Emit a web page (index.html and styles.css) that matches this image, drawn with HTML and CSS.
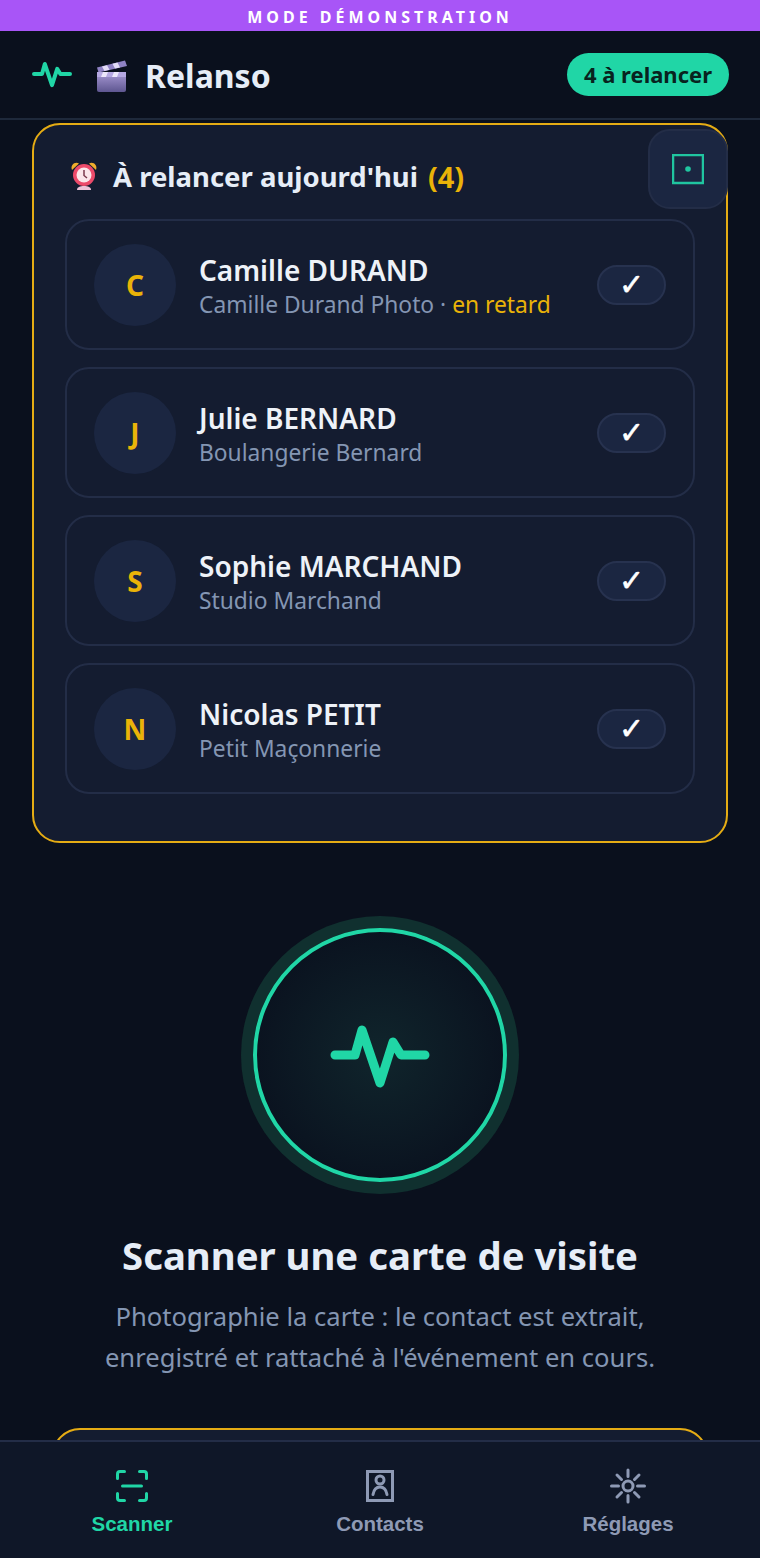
FILE: index.html
```html
<!DOCTYPE html>
<html lang="fr">
<head>
<meta charset="utf-8">
<title>Relanso</title>
<link rel="stylesheet" href="styles.css">
</head>
<body>
<div class="app">
  <div class="demo-bar">MODE DÉMONSTRATION</div>
  <header class="top">
    <div class="brand">
      <svg class="brand-pulse" viewBox="0 0 120 120"><path d="M15 60H35L42 35L60 88L73 47L81 60H105"/></svg>
      <svg class="clapper" viewBox="0 0 32 34">
        <defs><linearGradient id="cb" x1="0" y1="0" x2="0" y2="1"><stop offset="0" stop-color="#a99bd6"/><stop offset="1" stop-color="#5e5690"/></linearGradient></defs>
        <path d="M1 8.500L29 1.500L31 7L2.500 13.500Z" fill="#8f82c4"/>
        <path d="M6 7.500L11 6.200L13.500 10.800L8.500 12ZM16.500 4.800L21.500 3.600L24 8.400L19 9.500Z" fill="#e3dcf7"/>
        <rect x="1" y="13" width="29" height="20" rx="2" fill="url(#cb)"/>
        <path d="M1 13H30V18H1Z" fill="#b5a8e2"/>
        <path d="M7 13H12L10 18H5ZM18 13H23L21 18H16Z" fill="#ece7fb"/>
      </svg>
      <span class="brand-name">Relanso</span>
    </div>
    <div class="count-pill">4 à relancer</div>
  </header>
  <div class="stage">
    <main class="content">
      <section class="due-card">
        <h2 class="due-title">
          <svg class="alarm" viewBox="0 0 28 32">
            <path d="M2 10C0 5 5 1 9 3.500ZM26 10C28 5 23 1 19 3.500Z" fill="#f0ae2c"/>
            <path d="M7 30C7 27 10 26 14 26C18 26 21 27 21 30Z" fill="#eec3d8"/>
            <circle cx="14" cy="15" r="11" fill="#ec4a6a"/>
            <circle cx="14" cy="15" r="7.500" fill="#fbe6ea"/>
            <path d="M14 10V15.500L17 18" fill="none" stroke="#7c3b4e" stroke-width="1.500"/>
          </svg>
          <span>À relancer aujourd'hui</span> <span class="due-count">(4)</span>
        </h2>
        <ul class="due-list">
          <li class="due-row">
            <div class="avatar">C</div>
            <div class="who"><div class="who-name">Camille DURAND</div><div class="who-org">Camille Durand Photo · <span class="late">en retard</span></div></div>
            <div class="check">✓</div>
          </li>
          <li class="due-row">
            <div class="avatar">J</div>
            <div class="who"><div class="who-name">Julie BERNARD</div><div class="who-org">Boulangerie Bernard</div></div>
            <div class="check">✓</div>
          </li>
          <li class="due-row">
            <div class="avatar">S</div>
            <div class="who"><div class="who-name">Sophie MARCHAND</div><div class="who-org">Studio Marchand</div></div>
            <div class="check">✓</div>
          </li>
          <li class="due-row">
            <div class="avatar">N</div>
            <div class="who"><div class="who-name">Nicolas PETIT</div><div class="who-org">Petit Maçonnerie</div></div>
            <div class="check">✓</div>
          </li>
        </ul>
      </section>
      <section class="scan">
        <div class="scan-ring">
          <svg class="scan-pulse" viewBox="0 0 120 120"><path d="M15 60H35L42 35L60 88L73 47L81 60H105"/></svg>
        </div>
        <h1 class="scan-title">Scanner une carte de visite</h1>
        <p class="scan-text">Photographie la carte : le contact est extrait, enregistré et rattaché à l'événement en cours.</p>
      </section>
      <div class="event-card"></div>
    </main>
    <button class="float-btn" aria-label="Focus">
      <svg viewBox="0 0 32 32"><rect x="1" y="1" width="30" height="28"/><circle cx="16" cy="15" r="2.800"/></svg>
    </button>
  </div>
  <nav class="tabs">
    <a class="tab tab-on">
      <svg viewBox="0 0 36 36"><path d="M3.500 10.500V6Q3.500 3.500 6 3.500H10.500M25.500 3.500H30Q32.500 3.500 32.500 6V10.500M32.500 25.500V30Q32.500 32.500 30 32.500H25.500M10.500 32.500H6Q3.500 32.500 3.500 30V25.500M8.500 18H27.500"/></svg>
      <span>Scanner</span>
    </a>
    <a class="tab">
      <svg viewBox="0 0 36 36"><rect class="contact-frame" x="5.500" y="3.500" width="25" height="29"/><circle cx="18" cy="12" r="4"/><path d="M11 26.500C12 21 15 19 18 19C21 19 24 21 25 26.500"/></svg>
      <span>Contacts</span>
    </a>
    <a class="tab">
      <svg viewBox="0 0 36 36"><circle cx="18" cy="18" r="5"/><path d="M18 2V8.500M18 27.500V34M1.500 18H8.500M27.500 18H34.500M7 7L11.500 11.500M24.500 24.500L29 29M7 29L11.500 24.500M24.500 11.500L29 7"/></svg>
      <span>Réglages</span>
    </a>
  </nav>
</div>
</body>
</html>
```
FILE: styles.css
```css
* { box-sizing: border-box; }
html, body { margin: 0; padding: 0; height: 100%; }
body { background: #0a101d; color: #e2e8f0; font-family: "Noto Sans", "Open Sans", sans-serif; overflow: hidden; }
.app { height: 1558px; display: flex; flex-direction: column; }

.demo-bar { height: 31px; flex: none; background: #a855f7; color: #fff; font-size: 16px; font-weight: 700; letter-spacing: 4px; text-align: center; line-height: 34px; }

.top { height: 89px; flex: none; display: flex; align-items: center; justify-content: space-between; padding: 0 31px 0 32px; border-bottom: 2px solid #1e293b; }
.brand { display: flex; align-items: center; }
.brand-pulse { width: 48px; height: 48px; margin: -2px 20px 0 -4px; }
.brand-pulse path { fill: none; stroke: #20d6a6; stroke-width: 10; stroke-linecap: round; stroke-linejoin: round; }
.clapper { width: 32px; height: 34px; margin: 2px 17px 0 0; }
.brand-name { font-size: 32px; font-weight: 700; color: #e6edf7; padding-top: 2px; }
.count-pill { height: 43px; margin-bottom: 1px; padding: 0 17px; border-radius: 22px; background: #20d6a6; color: #08231e; font-size: 22px; font-weight: 700; line-height: 43px; }

.stage { flex: 1; min-height: 0; position: relative; overflow: hidden; }
.content { padding: 3px 32px 0; }

.due-card { background: #141c30; border: 2px solid #e5ac14; border-radius: 28px; padding: 30px 31px 47px; height: 720px; }
.due-title { margin: 0 0 22px; height: 42px; display: flex; align-items: center; gap: 10px; font-size: 27.500px; font-weight: 700; color: #e6edf7; }
.alarm { width: 28px; height: 32px; margin-left: 5px; margin-right: 5px; }
.due-count { color: #eab308; font-size: 29px; }
.due-list { list-style: none; margin: 0; padding: 0; display: flex; flex-direction: column; gap: 17px; }
.due-row { height: 131px; display: flex; align-items: center; gap: 23px; padding: 0 27px; border: 2px solid #232d47; border-radius: 24px; }
.avatar { width: 82px; height: 82px; flex: none; border-radius: 50%; background: #1b2641; color: #eab308; font-size: 28px; font-weight: 700; display: flex; align-items: center; justify-content: center; }
.who { flex: 1; min-width: 0; padding-top: 5px; }
.who-name { font-size: 28px; font-weight: 600; line-height: 36px; color: #eef2f8; }
.who-org { font-size: 22.800px; line-height: 34px; color: #8496b3; }
.late { color: #eab308; }
.check { width: 69px; height: 40px; flex: none; border-radius: 20px; background: #1b2641; border: 2px solid #27324f; color: #fff; font-family: "DejaVu Sans", sans-serif; font-size: 30px; font-weight: 700; text-align: center; line-height: 36px; -webkit-text-stroke: 0.6px #fff; }

.scan { margin-top: 97px; display: flex; flex-direction: column; align-items: center; }
.scan-ring { width: 254px; height: 254px; margin-top: -12px; border-radius: 50%; border: 4px solid #20d6a6; box-shadow: 0 0 0 12px #10302f; background: radial-gradient(circle, #10252c 0%, #0a121f 75%); display: flex; align-items: center; justify-content: center; }
.scan-pulse { width: 120px; height: 120px; }
.scan-pulse path { fill: none; stroke: #20d6a6; stroke-width: 9; stroke-linecap: round; stroke-linejoin: round; }
.scan-title { margin: 47px 0 0; font-size: 38.300px; font-weight: 700; line-height: 52px; color: #e6edf7; text-align: center; }
.scan-text { margin: 15px 0 0; width: 570px; font-size: 25.600px; line-height: 41px; color: #8496b3; text-align: center; }
.event-card { height: 200px; margin: 50px 20px 0; background: #141c30; border: 2px solid #e5ac14; border-radius: 28px; }

.float-btn { position: absolute; top: 9px; right: 32px; width: 80px; height: 80px; padding: 2px 0 0; border: 2px solid #232d47; border-radius: 22px; background: #1b2641; display: flex; align-items: center; justify-content: center; }
.float-btn svg { width: 32px; height: 32px; }
.float-btn rect { fill: none; stroke: #20c5a0; stroke-width: 2.500; }
.float-btn circle { fill: #20c5a0; }

.tabs { height: 118px; flex: none; display: grid; grid-template-columns: 264px 232px 264px; background: #0f1728; border-top: 2px solid #232d47; position: relative; }
.tab { display: flex; flex-direction: column; align-items: center; gap: 8px; padding-top: 26px; color: #8e9ab5; font-family: "Liberation Sans", Arial, sans-serif; font-size: 20.500px; font-weight: 700; line-height: 24px; }
.tab svg { width: 36px; height: 36px; fill: none; stroke: currentColor; stroke-width: 3; stroke-linecap: round; }
.tab-on { color: #20d6a6; }
```
